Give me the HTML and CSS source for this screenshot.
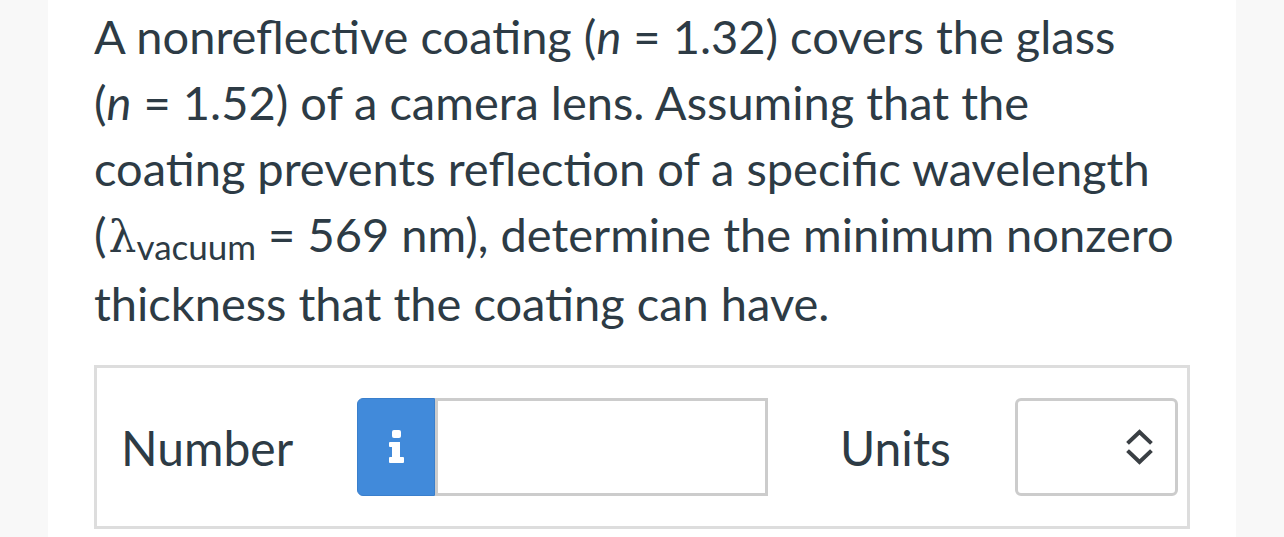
FILE: index.html
```html
<!DOCTYPE html>
<html lang="en">
<head>
<meta charset="utf-8">
<title>Question</title>
<link rel="stylesheet" href="styles.css">
</head>
<body>
<main class="page">
  <p class="question">A nonreflective coating <span class="nw">(<i>n</i> = 1.32)</span> covers the glass <span class="nw">(<i>n</i> = 1.52)</span> of a camera lens. Assuming that the coating prevents reflection of a specific wavelength <span class="nw">(<span class="lambda">λ</span><sub class="sub">vacuum</sub> = 569 nm),</span> determine the minimum nonzero thickness that the coating can have.</p>
  <div class="answer">
    <label class="label label-number">Number</label>
    <div class="input-group">
      <button class="info-btn" type="button" aria-label="info">
        <svg width="17" height="34" viewBox="0 0 17 34" aria-hidden="true">
          <rect x="4" y="0" width="9" height="8" rx="2" fill="#fff"/>
          <path d="M2 12 H12 V27 H15 Q16 27 16 28 V32 Q16 33 15 33 H2 Q1 33 1 32 V28 Q1 27 2 27 H4 V17 H2 Q1 17 1 16 V13 Q1 12 2 12 Z" fill="#fff"/>
        </svg>
      </button>
      <div class="text-input"></div>
    </div>
    <label class="label label-units">Units</label>
    <div class="select">
      <svg class="chev" width="27" height="36" viewBox="0 0 27 36" aria-hidden="true">
        <path d="M3 13 L13.5 3 L24 13" fill="none" stroke="#3a3f44" stroke-width="4" stroke-linecap="square"/>
        <path d="M3 23 L13.5 33 L24 23" fill="none" stroke="#3a3f44" stroke-width="4" stroke-linecap="square"/>
      </svg>
    </div>
  </div>
</main>
</body>
</html>
```

FILE: styles.css
```css
html, body {
  margin: 0;
  padding: 0;
}
body {
  background: #f8f8f8;
  font-family: Lato, "Liberation Sans", sans-serif;
  color: #2d3b45;
}
.page {
  margin: 0 48px;
  background: #ffffff;
  height: 537px;
  padding: 3px 46px 0;
  box-sizing: border-box;
}
.question {
  margin: 0;
  font-size: 47px;
  line-height: 66px;
}
.question i {
  font-style: italic;
}
.nw {
  white-space: nowrap;
}
.lambda {
  font-family: "DejaVu Serif", serif;
  font-size: 44px;
  margin-left: 2px;
}
.sub {
  font-size: 35px;
  vertical-align: baseline;
  position: relative;
  top: 8px;
  line-height: 0;
}
.answer {
  margin-top: 29px;
  border: 3px solid #dddddd;
  padding: 30px 24px;
  display: flex;
  align-items: center;
  height: 98px;
  box-sizing: content-box;
}
.label {
  font-size: 48px;
  color: #2d3b45;
}
.label-number {
  flex: 0 0 236px;
}
.input-group {
  display: flex;
  flex: 0 0 411px;
  height: 98px;
}
.info-btn {
  flex: 0 0 78px;
  height: 98px;
  margin: 0;
  padding: 0;
  border: 1px solid #3a7fcc;
  border-radius: 6px 0 0 6px;
  background: #418ada;
  display: flex;
  align-items: center;
  justify-content: center;
  box-sizing: border-box;
}
.text-input {
  flex: 1 1 auto;
  border: 3px solid #cccccc;
  background: #fff;
  box-sizing: border-box;
}
.label-units {
  margin-left: 72px;
  flex: 0 0 175px;
}
.select {
  flex: 0 0 163px;
  height: 98px;
  border: 3px solid #cccccc;
  border-radius: 6px;
  box-sizing: border-box;
  display: flex;
  align-items: center;
  justify-content: flex-end;
  padding-right: 22px;
}
```
